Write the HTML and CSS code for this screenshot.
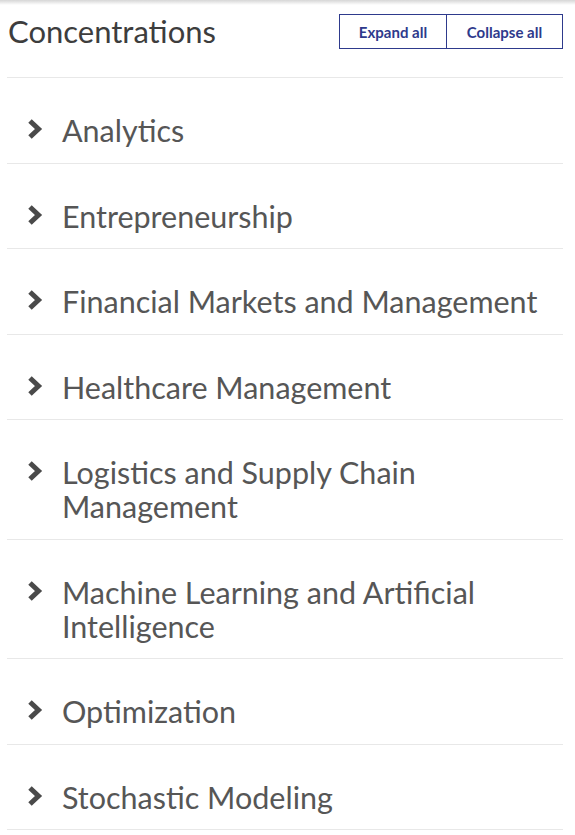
FILE: index.html
```html
<!DOCTYPE html>
<html>
<head>
<meta charset="utf-8">
<link rel="stylesheet" href="styles.css">
</head>
<body>
<div class="topshade"></div>
<div class="wrap">
  <div class="head">
    <h2 class="title">Concentrations</h2>
    <div class="btns">
      <button class="btn">Expand all</button>
      <button class="btn">Collapse all</button>
    </div>
  </div>
  <ul class="list">
    <li class="item"><svg class="chev" viewBox="0 0 16 22"><polyline points="3,3 11.5,11 3,19"/></svg><span class="label">Analytics</span></li>
    <li class="item"><svg class="chev" viewBox="0 0 16 22"><polyline points="3,3 11.5,11 3,19"/></svg><span class="label">Entrepreneurship</span></li>
    <li class="item"><svg class="chev" viewBox="0 0 16 22"><polyline points="3,3 11.5,11 3,19"/></svg><span class="label">Financial Markets and Management</span></li>
    <li class="item"><svg class="chev" viewBox="0 0 16 22"><polyline points="3,3 11.5,11 3,19"/></svg><span class="label">Healthcare Management</span></li>
    <li class="item"><svg class="chev" viewBox="0 0 16 22"><polyline points="3,3 11.5,11 3,19"/></svg><span class="label">Logistics and Supply Chain Management</span></li>
    <li class="item"><svg class="chev" viewBox="0 0 16 22"><polyline points="3,3 11.5,11 3,19"/></svg><span class="label">Machine Learning and Artificial Intelligence</span></li>
    <li class="item"><svg class="chev" viewBox="0 0 16 22"><polyline points="3,3 11.5,11 3,19"/></svg><span class="label">Optimization</span></li>
    <li class="item"><svg class="chev" viewBox="0 0 16 22"><polyline points="3,3 11.5,11 3,19"/></svg><span class="label">Stochastic Modeling</span></li>
  </ul>
</div>
</body>
</html>
```
FILE: styles.css
```css
html, body {
  margin: 0;
  padding: 0;
  background: #fff;
}
body {
  font-family: Lato, "Open Sans", sans-serif;
  color: #4a4a4a;
}
.topshade {
  height: 5px;
  background: linear-gradient(to bottom, rgba(0,0,0,0.16), rgba(0,0,0,0));
  margin-bottom: -5px;
}
.wrap {
  padding: 0 12px 0 7px;
}
.head {
  display: flex;
  justify-content: space-between;
  align-items: flex-start;
  padding-top: 14px;
  height: 63px;
  border-bottom: 1px solid #e8e8e8;
}
.title {
  margin: -1.5px 0 0 1px;
  font-size: 31px;
  font-weight: 400;
  line-height: 36px;
  color: #3d3d3d;
}
.btns {
  display: flex;
}
.btn {
  font-family: Lato, sans-serif;
  font-weight: 700;
  font-size: 15px;
  color: #2e3a8c;
  background: #fff;
  border: 1px solid #2e3a8c;
  height: 35px;
  padding: 0;
  width: 108px;
}
.btn + .btn {
  border-left: none;
  width: 116px;
}
.list {
  list-style: none;
  margin: 0;
  padding: 0;
}
.item {
  display: flex;
  align-items: flex-start;
  padding: 35px 0 15.5px;
  border-bottom: 1px solid #e8e8e8;
  line-height: 34px;
  font-size: 30.5px;
}
.chev {
  width: 16px;
  height: 22px;
  margin: 5px 19.5px 0 19.5px;
  flex: none;
}
.chev polyline {
  fill: none;
  stroke: #4a4a4a;
  stroke-width: 5;
  stroke-linejoin: miter;
  stroke-linecap: butt;
}
.label {
  color: #565656;
  font-weight: 400;
}
```
